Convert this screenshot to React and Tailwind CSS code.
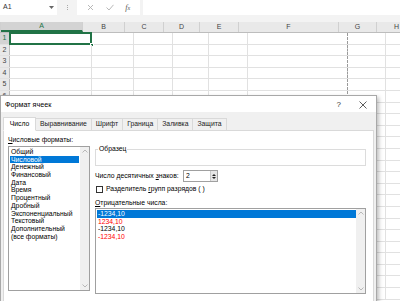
import React from "react";

const cols = [
  { n: "A", w: "w-[82px]" },
  { n: "B", w: "w-[42px]" },
  { n: "C", w: "w-[39px]" },
  { n: "D", w: "w-[36px]" },
  { n: "E", w: "w-[39px]" },
  { n: "F", w: "w-[100px]" },
  { n: "G", w: "w-[38px]" },
  { n: "H", w: "w-[40px]" },
];

const rows = Array.from({ length: 23 }, (_, i) => i + 1);

const formats = [
  "Общий",
  "Числовой",
  "Денежный",
  "Финансовый",
  "Дата",
  "Время",
  "Процентный",
  "Дробный",
  "Экспоненциальный",
  "Текстовый",
  "Дополнительный",
  "(все форматы)",
];

const negatives = [
  { t: "-1234,10", c: "text-white bg-[#0078d7]" },
  { t: "1234,10", c: "text-[#ff0000]" },
  { t: "-1234,10", c: "text-black" },
  { t: "-1234,10", c: "text-[#ff0000]" },
];

const tabs = ["Выравнивание", "Шрифт", "Граница", "Заливка", "Защита"];

function ScrollBar() {
  return (
    <div className="w-[9px] h-full bg-[#f0f0f0] flex flex-col items-center justify-between py-[2px] text-[#b8b8b8]">
      <svg width="6" height="4" viewBox="0 0 6 4">
        <path d="M0.5 3.5 L3 1 L5.5 3.5" fill="none" stroke="currentColor" strokeWidth="1" />
      </svg>
      <svg width="6" height="4" viewBox="0 0 6 4">
        <path d="M0.5 0.5 L3 3 L5.5 0.5" fill="none" stroke="currentColor" strokeWidth="1" />
      </svg>
    </div>
  );
}

function Sheet() {
  return (
    <div className="flex flex-col">
      {/* formula bar */}
      <div className="h-[22px] bg-[#f3f3f3] flex items-start">
        <div className="w-[57px] h-[15px] bg-white flex items-center justify-between pl-[3px] pr-[3px] text-[7px] text-[#333]">
          <span>A1</span>
          <svg width="5" height="3" viewBox="0 0 5 3">
            <path d="M0 0 L5 0 L2.5 3 Z" fill="#666" />
          </svg>
        </div>
        <div className="w-[20px] h-[15px] flex flex-col items-center justify-center gap-[1px]">
          <div className="w-[1px] h-[1px] bg-[#aaa]" />
          <div className="w-[1px] h-[1px] bg-[#aaa]" />
          <div className="w-[1px] h-[1px] bg-[#aaa]" />
        </div>
        <div className="w-[63px] h-[15px] bg-white flex items-center justify-around px-[4px] text-[#b0b0b0]">
          <svg width="7" height="7" viewBox="0 0 7 7">
            <path d="M1 1 L6 6 M6 1 L1 6" stroke="currentColor" strokeWidth="0.9" />
          </svg>
          <svg width="8" height="7" viewBox="0 0 8 7">
            <path d="M0.5 3.5 L3 6 L7.5 0.8" fill="none" stroke="currentColor" strokeWidth="0.9" />
          </svg>
          <span className="font-['Liberation_Serif',serif] italic text-[8px] text-[#555] leading-none">
            f<span className="text-[6px]">x</span>
          </span>
        </div>
        <div className="w-[3px]" />
        <div className="flex-1 h-[15px] bg-white" />
      </div>

      {/* column headers */}
      <div className="flex h-[11px] bg-[#e9e9e9] border-b border-[#bdbdbd]">
        <div className="w-[10px] h-full border-r border-[#d0d0d0] relative">
          <svg className="absolute right-[1px] bottom-[1px]" width="6" height="6" viewBox="0 0 6 6">
            <path d="M6 0 L6 6 L0 6 Z" fill="#b8b8b8" />
          </svg>
        </div>
        {cols.map((c) => (
          <div
            key={c.n}
            className={
              c.w +
              " h-full shrink-0 flex items-center justify-center text-[7px] border-r border-[#d0d0d0] " +
              (c.n === "A"
                ? "bg-[#d3d3d3] text-[#217346] border-b-2 border-b-[#217346]"
                : "text-[#444]")
            }
          >
            {c.n}
          </div>
        ))}
      </div>

      {/* rows */}
      {rows.map((r) => (
        <div key={r} className="flex h-[11.6px] border-b border-[#e1e1e1]">
          <div
            className={
              "w-[10px] h-full shrink-0 flex items-center justify-center text-[7px] border-r border-[#bdbdbd] " +
              (r === 1 ? "bg-[#d3d3d3] text-[#217346]" : "bg-[#e9e9e9] text-[#444]")
            }
          >
            {r}
          </div>
          {cols.map((c) => (
            <div
              key={c.n}
              className={
                c.w +
                " h-full shrink-0 border-r relative " +
                (c.n === "F" ? "border-dashed border-r-[#9a9a9a]" : "border-[#e1e1e1]")
              }
            >
              {r === 1 && c.n === "A" && (
                <>
                  <div className="absolute -left-[1px] -top-[1px] -right-[1px] -bottom-[1px] border-2 border-[#217346]" />
                  <div className="absolute -right-[3px] -bottom-[3px] w-[4px] h-[4px] bg-[#217346] border border-white" />
                </>
              )}
            </div>
          ))}
        </div>
      ))}
    </div>
  );
}

function Dialog() {
  return (
    <div className="absolute left-0 top-[95px] w-[377px] h-[230px] bg-[#f0f0f0] border border-[#a8a8a8] shadow-[2px_2px_4px_rgba(0,0,0,0.25)] flex flex-col">
      {/* title bar */}
      <div className="h-[16px] bg-white flex items-center justify-between pl-[4px] pr-[9px] pt-[2px] text-[7.2px]">
        <span>Формат ячеек</span>
        <div className="flex items-center gap-[18px] text-[#333]">
          <span className="text-[8px]">?</span>
          <svg width="8" height="8" viewBox="0 0 8 8">
            <path d="M0.5 0.5 L7.5 7.5 M7.5 0.5 L0.5 7.5" stroke="#333" strokeWidth="0.8" />
          </svg>
        </div>
      </div>

      {/* tabs */}
      <div className="h-[18px] flex items-end pl-[2px] relative z-10">
        <div className="w-[33px] h-[14px] bg-white border border-[#d9d9d9] border-b-white flex items-center justify-center text-[6.8px] -mb-[1px]">
          Число
        </div>
        {tabs.map((t) => (
          <div
            key={t}
            className="h-[12px] px-[4px] bg-[#f0f0f0] border border-[#d9d9d9] border-b-0 -ml-[1px] flex items-center text-[6.8px] text-[#222]"
          >
            {t}
          </div>
        ))}
      </div>

      {/* panel */}
      <div className="flex-1 mx-[2px] bg-white border border-[#d9d9d9] flex gap-[5px] pl-[4px] text-[6.8px]">
        {/* left column */}
        <div className="w-[82px] flex flex-col pt-[5px]">
          <div className="leading-[8px] mb-[2px]">
            <span className="underline">Ч</span>исловые форматы:
          </div>
          <div className="h-[145px] border border-[#a0a0a0] flex">
            <div className="flex-1 pt-[1px] pl-[1px] pr-[1px]">
              {formats.map((f) => (
                <div
                  key={f}
                  className={
                    "h-[7.7px] leading-[7.7px] pl-[1px] whitespace-nowrap " +
                    (f === "Числовой" ? "bg-[#0078d7] text-white" : "text-black")
                  }
                >
                  {f}
                </div>
              ))}
            </div>
            <ScrollBar />
          </div>
        </div>

        {/* right column */}
        <div className="w-[271px] flex flex-col pt-[14px]">
          <fieldset className="h-[21px] border border-[#dcdcdc] pl-[2px]">
            <legend className="px-[1px] leading-[8px]">Образец</legend>
          </fieldset>

          <div className="flex items-center mt-[4px] h-[12px]">
            <span className="w-[88px] whitespace-nowrap">
              Число десятичных <span className="underline">з</span>наков:
            </span>
            <div className="w-[35px] h-[12px] border border-[#a0a0a0] flex">
              <div className="flex-1 pl-[2px] leading-[10px]">2</div>
              <div className="w-[7px] bg-[#e6e6e6] border-l border-[#c8c8c8] flex flex-col items-center justify-center gap-[1px]">
                <svg width="4" height="2" viewBox="0 0 4 2">
                  <path d="M0 2 L2 0 L4 2 Z" fill="#222" />
                </svg>
                <svg width="4" height="2" viewBox="0 0 4 2">
                  <path d="M0 0 L4 0 L2 2 Z" fill="#222" />
                </svg>
              </div>
            </div>
          </div>

          <div className="flex items-center mt-[3px] h-[9px] pl-[1px]">
            <div className="w-[7px] h-[7px] border border-[#333] bg-white mr-[3px]" />
            <span className="whitespace-nowrap">
              Разделитель <span className="underline">г</span>рупп разрядов ( )
            </span>
          </div>

          <div className="mt-[5px] leading-[8px] mb-[1px]">
            <span className="underline">О</span>трицательные числа:
          </div>
          <div className="h-[86px] border border-[#a0a0a0] flex">
            <div className="flex-1 pt-[1px] pl-[1px]">
              {negatives.map((n, i) => (
                <div key={i} className={"h-[7.7px] leading-[7.7px] pl-[1px] " + n.c}>
                  {n.t}
                </div>
              ))}
            </div>
            <ScrollBar />
          </div>
        </div>
      </div>
    </div>
  );
}

export default function App() {
  return (
    <div className="w-[400px] h-[301px] relative overflow-hidden bg-white font-['Liberation_Sans',Arial,sans-serif] text-black">
      <Sheet />
      <Dialog />
    </div>
  );
}
